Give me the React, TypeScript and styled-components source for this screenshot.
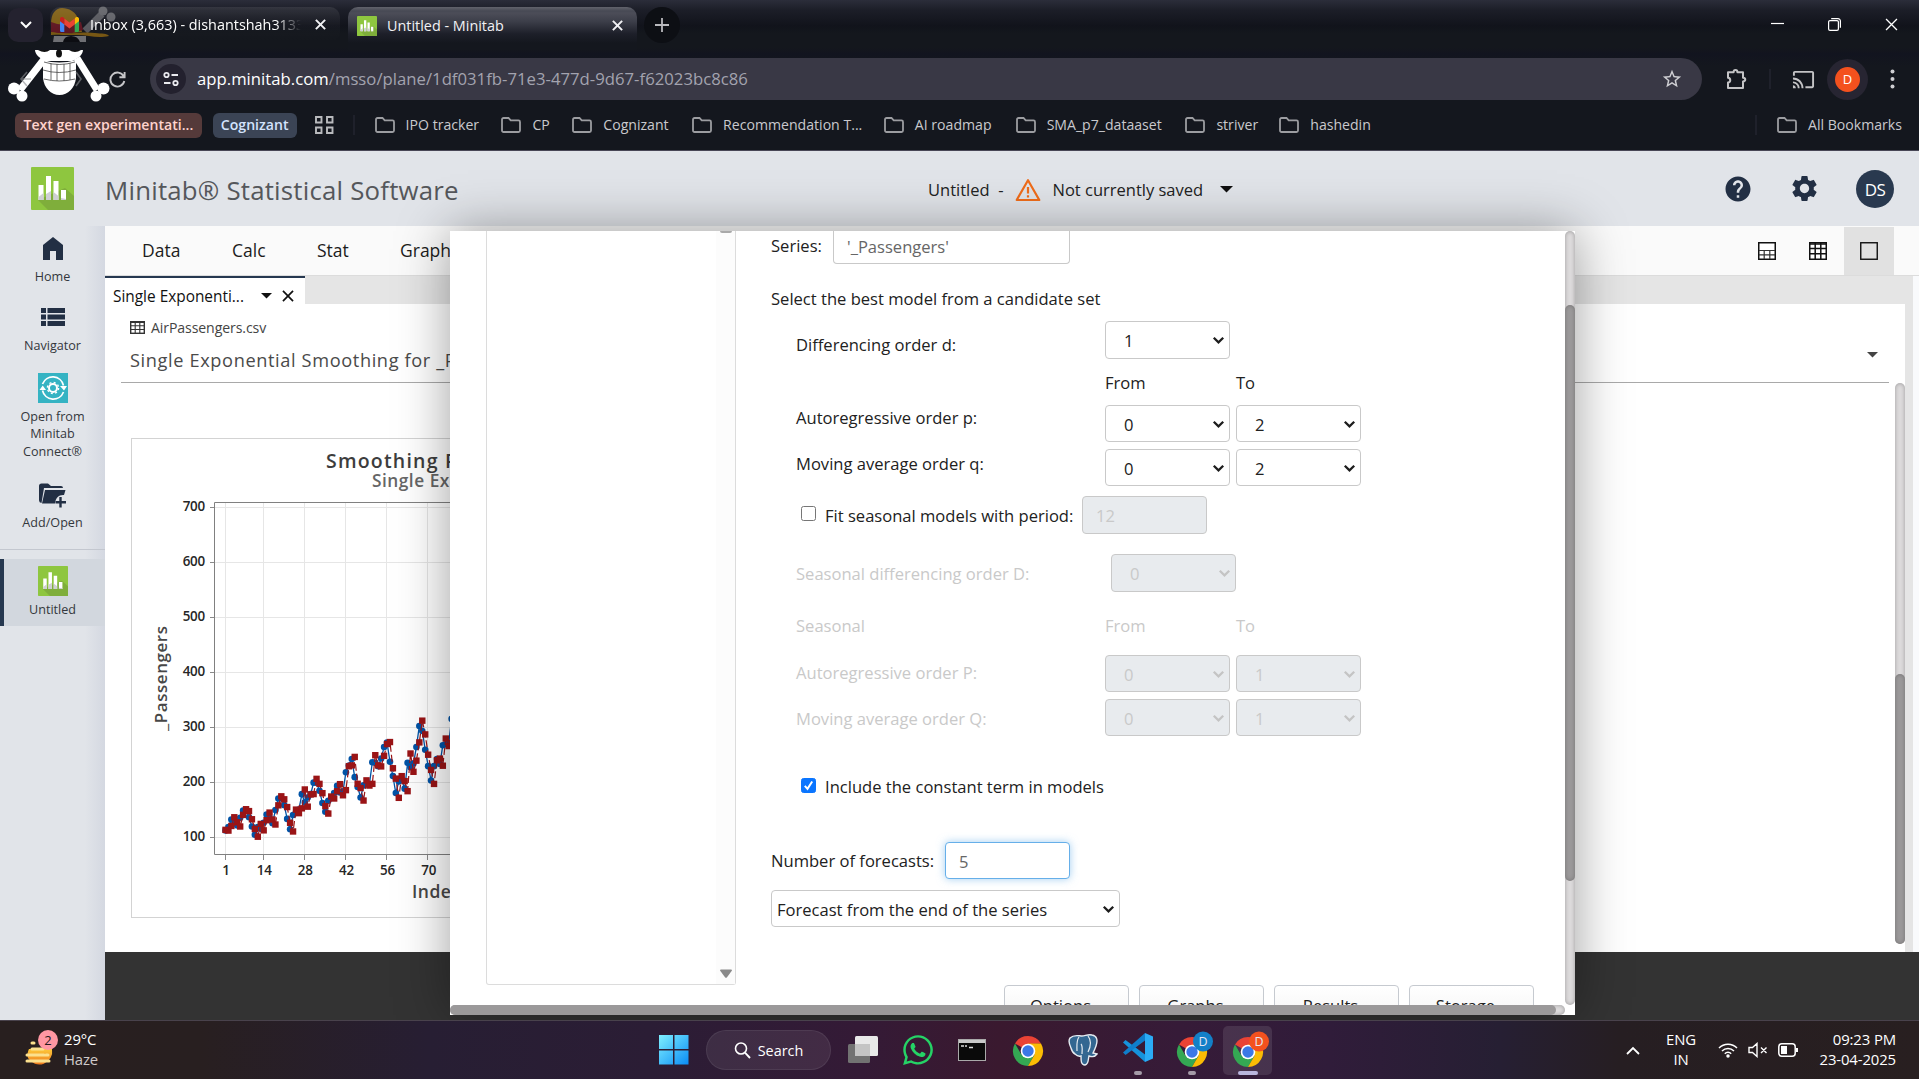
import React from "react";
import styled, { createGlobalStyle } from "styled-components";
import { MdCast, MdHelp, MdSettings, MdStarBorder } from "react-icons/md";
import { FaWhatsapp } from "react-icons/fa";

const ui = `"Open Sans", "Noto Sans", sans-serif`;

const Global = createGlobalStyle`
  * { box-sizing: border-box; }
  body { margin: 0; overflow: hidden; background: #333; font-family: ${ui}; }
  svg { display: block; flex: none; }
`;

const Screen = styled.div`
  position: relative;
  width: 1919px;
  height: 1079px;
  display: flex;
  flex-direction: column;
  overflow: hidden;
`;

/* ---------- browser ---------- */

const Browser = styled.header`
  position: relative;
  height: 151px;
  flex: none;
  background: linear-gradient(#2b2d3a 0, #1c1e28 10px, #11131b 26px, #14171d 34px, #14171d 48px, #12141f 54px, #14171e 66px, #14171e 100%);
  border-bottom: 1px solid #484756;
  color: #e3e3e8;
`;

const TabStrip = styled.div`
  height: 50px;
  display: flex;
  align-items: flex-start;
  padding: 7px 0 0 8px;
`;

const TabSearch = styled.div`
  width: 35px;
  height: 34px;
  margin-top: 1px;
  border-radius: 10px;
  background: #24222f;
  display: flex;
  align-items: center;
  justify-content: center;
`;

const BrowserTab = styled.div<{ $active?: boolean }>`
  position: relative;
  width: ${(p) => (p.$active ? 289 : 290)}px;
  height: ${(p) => (p.$active ? 43 : 35)}px;
  margin-left: ${(p) => (p.$active ? 8 : 7)}px;
  padding: ${(p) => (p.$active ? "0 14px 6px 9px" : "0 14px 0 10px")};
  border-radius: 10px 10px ${(p) => (p.$active ? "0 0" : "10px 10px")};
  background: ${(p) =>
    p.$active
      ? "linear-gradient(#62636c 0, #474954 4px, #4c4d58 6px, #3d3f4a 14px, #1d1f29 27px, #14171e 36px)"
      : "linear-gradient(rgba(255,255,255,0.09) 0, rgba(255,255,255,0.05) 10px, rgba(255,255,255,0.01) 24px, transparent 100%)"};
  display: flex;
  align-items: center;
  font-size: 14.4px;
  color: #f1f1f4;
  white-space: nowrap;
`;

const TabTitle = styled.span<{ $ml: number; $fade?: boolean }>`
  flex: 1;
  margin-left: ${(p) => p.$ml}px;
  margin-right: 14px;
  overflow: hidden;
  line-height: 22px;
  ${(p) => p.$fade && "color: #fff; mask-image: linear-gradient(90deg, #000 88%, transparent 100%);"}
`;

const NewTab = styled.div`
  width: 36px;
  height: 36px;
  margin: 0 0 0 7px;
  border-radius: 50%;
  background: #0d0f14;
  display: flex;
  align-items: center;
  justify-content: center;
`;

const WindowButtons = styled.div`
  margin-left: auto;
  padding: 11px 21px 0 0;
  display: flex;
  align-items: center;
  gap: 44px;
`;

const Toolbar = styled.div`
  height: 58px;
  display: flex;
  align-items: center;
  padding: 0 18px 0 109px;
`;

const AddressBar = styled.div`
  width: 1552px;
  height: 42px;
  margin-left: 24px;
  padding: 0 19px 0 6px;
  border-radius: 21px;
  background: #393845;
  display: flex;
  align-items: center;
  font-size: 16.7px;
  letter-spacing: 0.02px;
  color: #a3a3af;
  b { font-weight: 400; color: #fff; }
`;

const SiteInfo = styled.div`
  width: 30px;
  height: 30px;
  border-radius: 50%;
  background: #23212e;
  margin-right: 11px;
  display: flex;
  align-items: center;
  justify-content: center;
`;

const Url = styled.span`
  flex: 1;
  line-height: 24px;
`;

const Profile = styled.div`
  width: 41px;
  height: 41px;
  margin-left: 12px;
  border-radius: 50%;
  background: #272532;
  display: flex;
  align-items: center;
  justify-content: center;
  span {
    width: 25px;
    height: 25px;
    border-radius: 50%;
    background: #f4511e;
    color: #fff;
    font-size: 13px;
    line-height: 25px;
    text-align: center;
  }
`;

const ToolIcon = styled.div<{ $ml: number }>`
  margin-left: ${(p) => p.$ml}px;
  color: #c4c4c6;
`;

const Divider = styled.div<{ $ml: number }>`
  width: 2px;
  height: 20px;
  margin-left: ${(p) => p.$ml}px;
  background: #1f212b;
`;

const Bookmarks = styled.div`
  height: 34px;
  display: flex;
  align-items: center;
  padding: 0 17px 0 15px;
  font-size: 14.1px;
  line-height: 18px;
  color: #c9c9cd;
  white-space: nowrap;
`;

const GroupChip = styled.div<{ $w: number; $bg: string; $fg: string }>`
  width: ${(p) => p.$w}px;
  height: 25px;
  margin-right: 11px;
  border-radius: 6px;
  background: ${(p) => p.$bg};
  color: ${(p) => p.$fg};
  font-size: 14.1px;
  font-weight: 600;
  letter-spacing: 0;
  line-height: 23px;
  text-align: center;
`;

const Bookmark = styled.div<{ $w: number }>`
  width: ${(p) => p.$w}px;
  display: flex;
  align-items: center;
  gap: 11px;
  span { padding-bottom: 1px; }
`;

const PirateMark = styled.svg`
  position: absolute;
  left: 0;
  top: 0;
`;

/* ---------- Minitab shell ---------- */

const AppArea = styled.main`
  position: relative;
  height: 869px;
  flex: none;
  display: flex;
  flex-direction: column;
  background: #e1e4e9;
  overflow: hidden;
`;

const AppHeader = styled.div`
  height: 75px;
  flex: none;
  display: flex;
  align-items: center;
  padding: 0 25px 0 31px;
`;

const Product = styled.h1`
  width: 823px;
  margin: 2px 0 0 31px;
  font-size: 25.8px;
  font-weight: 400;
  letter-spacing: 0.21px;
  line-height: 36px;
  color: #55575b;
`;

const SaveState = styled.div`
  display: flex;
  align-items: center;
  margin-top: 2px;
  font-size: 16.5px;
  line-height: 24px;
  color: #222;
  white-space: pre;
`;

const WarningIcon = styled.svg`
  margin: 0 11px 0 12px;
`;

const Account = styled.div`
  width: 38px;
  height: 38px;
  margin-left: 36px;
  border-radius: 50%;
  background: #29394f;
  color: #fff;
  font-size: 17px;
  letter-spacing: -0.5px;
  line-height: 39px;
  text-align: center;
`;

const HeaderTools = styled.div`
  margin-left: auto;
  display: flex;
  align-items: center;
  color: #222f44;
`;

const Body = styled.div`
  flex: 1;
  display: flex;
  min-height: 0;
`;

const Sidebar = styled.nav`
  width: 105px;
  flex: none;
  background: linear-gradient(90deg, #e1e4e9 85px, #d4d8e1 105px);
  display: flex;
  flex-direction: column;
`;

const SideItem = styled.div<{ $h: number; $pt: number; $on?: boolean }>`
  height: ${(p) => p.$h}px;
  padding-top: ${(p) => p.$pt}px;
  border-left: ${(p) => (p.$on ? "4px solid #263850" : "0")};
  padding-right: ${(p) => (p.$on ? 4 : 0)}px;
  background: ${(p) => (p.$on ? "#d2d7de" : "transparent")};
  display: flex;
  flex-direction: column;
  align-items: center;
`;

const SideLabel = styled.span<{ $mt: number }>`
  margin-top: ${(p) => p.$mt}px;
  font-size: 12.6px;
  line-height: 17.4px;
  text-align: center;
  color: #34373c;
`;

const SideRule = styled.div`
  height: 1px;
  margin-bottom: 9px;
  background: #c3c7cf;
`;

const Workspace = styled.section`
  flex: 1;
  display: flex;
  flex-direction: column;
  min-width: 0;
  background: #333;
`;

const MenuBar = styled.div`
  height: 50px;
  flex: none;
  display: flex;
  align-items: center;
  background: #fafafa;
  border-bottom: 1px solid #dcdcdc;
  padding: 0 25px 0 37px;
  font-size: 17.5px;
  color: #1c1c1c;
`;

const MenuEntry = styled.span<{ $w: number }>`
  width: ${(p) => p.$w}px;
  line-height: 24px;
  padding-bottom: 1px;
`;

const ViewButtons = styled.div`
  margin-left: auto;
  display: flex;
  gap: 1px;
`;

const ViewButton = styled.div<{ $on?: boolean }>`
  width: 50px;
  height: 48px;
  display: flex;
  align-items: center;
  justify-content: center;
  background: ${(p) => (p.$on ? "#e1e1e1" : "transparent")};
`;

const Columns = styled.div`
  height: 676px;
  flex: none;
  display: flex;
  background: #f9fafc;
`;

const Gutter = styled.div`
  width: 8px;
  background: #e5e5e5;
`;

const Pane = styled.div`
  width: 1800px;
  display: flex;
  flex-direction: column;
`;

const DocTabs = styled.div`
  height: 28px;
  flex: none;
  background: #e5e5e5;
`;

const DocTab = styled.div`
  width: 200px;
  height: 30px;
  padding: 8px 11px 0 8px;
  border-top: 2px solid #263850;
  background: #fff;
  position: relative;
  z-index: 1;
  display: flex;
  align-items: center;
  font-size: 15.4px;
  line-height: 20px;
  color: #111;
`;

const DocTitle = styled.span`
  flex: 1;
  padding-top: 2px;
  white-space: nowrap;
`;

const OutputHead = styled.div`
  height: 79px;
  flex: none;
  margin: 0 16px;
  padding: 13px 11px 0 9px;
  border-bottom: 1px solid #a9a9a9;
  display: flex;
`;

const OutputTitles = styled.div`
  flex: 1;
`;

const OutputMenu = styled.div`
  padding-top: 35px;
`;

const SourceFile = styled.div`
  height: 20px;
  display: flex;
  align-items: center;
  gap: 6px;
  font-size: 14.1px;
  letter-spacing: -0.1px;
  color: #444;
`;

const OutputTitle = styled.div`
  margin-top: 10px;
  font-size: 18.2px;
  letter-spacing: 0.62px;
  line-height: 26px;
  color: #4a4a4a;
`;

const OutputBody = styled.div`
  flex: 1;
  display: flex;
  background: #fff;
  min-height: 0;
`;

const Paper = styled.div`
  flex: 1;
  display: flex;
  flex-direction: column;
  background: #fff;
  min-height: 0;
`;

const ChartFrame = styled.div`
  width: 700px;
  height: 480px;
  margin: 55px 0 0 26px;
  border: 1px solid #d3d3d3;
`;

const ScrollTrack = styled.div<{ $h: number; $pt: number }>`
  width: 10px;
  height: ${(p) => p.$h}px;
  padding-top: ${(p) => p.$pt}px;
  border-radius: 5px;
  background: #dddbdc;
  box-shadow: inset 0 0 4px rgba(0, 0, 0, 0.3);
`;

const ScrollThumb = styled.div<{ $h: number }>`
  width: 10px;
  height: ${(p) => p.$h}px;
  border-radius: 5px;
  background: #9b999a;
  box-shadow: inset 0 0 4px rgba(0, 0, 0, 0.25);
`;

/* ---------- dialog ---------- */

const Dialog = styled.div`
  position: absolute;
  left: 450px;
  top: 80px;
  width: 1125px;
  height: 784px;
  z-index: 2;
  display: flex;
  flex-direction: column;
  background: #fff;
  box-shadow: 0 0 50px rgba(0, 0, 0, 0.38);
`;

const DialogRow = styled.div`
  height: 774px;
  display: flex;
  overflow: hidden;
`;

const DialogBody = styled.div`
  width: 1115px;
  height: 774px;
  display: flex;
  overflow: hidden;
`;

const VariableList = styled.div`
  width: 250px;
  height: 754px;
  margin-left: 36px;
  border: 1px solid #dcdcdc;
  border-top: 0;
  border-radius: 0 0 3px 3px;
  display: flex;
  justify-content: flex-end;
`;

const ListScroll = styled.div`
  width: 19px;
  background: #fcfcfc;
  display: flex;
  flex-direction: column;
  align-items: center;
  justify-content: space-between;
  padding-bottom: 6px;
`;

const ListThumbEnd = styled.div`
  width: 12px;
  height: 2px;
  background: #a9a9a9;
  border-radius: 0 0 2px 2px;
`;

const Form = styled.div`
  margin-left: 35px;
  width: 790px;
  display: flex;
  flex-direction: column;
  font-size: 16.57px;
  color: #212121;
`;

const Row = styled.div<{ $mt?: number; $h: number; $indent?: boolean; $off?: boolean }>`
  height: ${(p) => p.$h}px;
  flex: none;
  margin-top: ${(p) => p.$mt ?? 0}px;
  padding-left: ${(p) => (p.$indent ? 25 : 0)}px;
  color: ${(p) => (p.$off ? "#c9c9c9" : "#212121")};
  display: flex;
  align-items: center;
`;

const Label = styled.span<{ $w: number; $down?: number; $up?: number }>`
  width: ${(p) => p.$w}px;
  flex: none;
  line-height: 24px;
  padding-top: ${(p) => (p.$down ?? 0) * 2}px;
  padding-bottom: ${(p) => (p.$up ?? 0) * 2}px;
  white-space: nowrap;
`;

const Field = styled.div<{ $w: number; $off?: boolean; $focus?: boolean; $cut?: boolean }>`
  width: ${(p) => p.$w}px;
  height: 100%;
  padding: ${(p) => (p.$cut ? "0 13px 2px" : "1px 13px 0")};
  border: 1px solid ${(p) => (p.$focus ? "#66afe9" : "#c9c9c9")};
  border-top-width: ${(p) => (p.$cut ? 0 : 1)}px;
  border-radius: ${(p) => (p.$cut ? "0 0 4px 4px" : "4px")};
  background: ${(p) => (p.$off ? "#e8ebee" : "#fff")};
  box-shadow: ${(p) => (p.$focus ? "0 0 8px rgba(102, 175, 233, 0.6)" : "none")};
  color: ${(p) => (p.$off ? "#c9c9c9" : "#666")};
  display: flex;
  align-items: center;
`;

const SelectBox = styled.div<{ $w: number; $ml?: number; $off?: boolean; $flush?: boolean }>`
  width: ${(p) => p.$w}px;
  height: 100%;
  margin-left: ${(p) => p.$ml ?? 0}px;
  padding: 1px 4px 0 ${(p) => (p.$flush ? 5 : 18)}px;
  border: 1px solid #c9c9c9;
  border-radius: 4px;
  background: ${(p) => (p.$off ? "#e8ebee" : "#fff")};
  color: ${(p) => (p.$off ? "#c9c9c9" : "#212121")};
  display: flex;
  align-items: center;
  justify-content: space-between;
`;

const CheckBox = styled.div<{ $on?: boolean }>`
  width: 15px;
  height: 15px;
  margin: 0 9px 3px 5px;
  border-radius: 2.5px;
  border: 1.3px solid ${(p) => (p.$on ? "#0a75ff" : "#767676")};
  background: ${(p) => (p.$on ? "#0a75ff" : "#fff")};
`;

const Buttons = styled.div`
  margin: 58px 0 0 233px;
  display: flex;
  flex: none;
  gap: 10px;
`;

const DialogButton = styled.div`
  width: 125px;
  height: 38px;
  flex: none;
  padding-left: 1px;
  border: 1px solid #c6cad0;
  border-radius: 4px;
  background: linear-gradient(#fff, #f4f4f4);
  line-height: 39px;
  text-align: center;
`;

const HScroll = styled.div`
  width: 1115px;
  height: 10px;
  border-radius: 5px;
  background: #dddbdc;
  box-shadow: inset 0 0 4px rgba(0, 0, 0, 0.3);
`;

const HThumb = styled.div`
  width: 1106px;
  height: 10px;
  border-radius: 5px;
  background: #9b999a;
`;

/* ---------- taskbar ---------- */

const Taskbar = styled.footer`
  height: 59px;
  flex: none;
  border-top: 1px solid #49424c;
  background: linear-gradient(90deg, #281f1f 0, #281f20 200px, #271e33 430px, #2b1d35 650px, #341a36 860px, #3a192f 1000px, #361b38 1180px, #301c3a 1330px, #261f33 1500px, #261e22 1620px, #281f20 100%);
  display: flex;
  align-items: center;
  color: #fff;
`;

const Weather = styled.div`
  width: 634px;
  padding-left: 22px;
  display: flex;
  align-items: center;
  gap: 6px;
`;

const TwoLines = styled.div<{ $w?: number; $align?: string; $ml?: number }>`
  width: ${(p) => (p.$w ? p.$w + "px" : "auto")};
  margin-left: ${(p) => p.$ml ?? 0}px;
  padding-bottom: 2px;
  text-align: ${(p) => p.$align ?? "left"};
  font-size: 14.9px;
  letter-spacing: -0.12px;
  line-height: 20px;
  white-space: nowrap;
`;

const Muted = styled.span`
  color: #cfcaca;
`;

const TaskIcons = styled.div`
  display: flex;
  align-items: center;
`;

const TaskSlot = styled.div<{ $w: number; $on?: boolean; $mid?: boolean }>`
  width: ${(p) => p.$w}px;
  height: 49px;
  display: flex;
  flex-direction: column;
  align-items: center;
  justify-content: ${(p) => (p.$mid ? "center" : "flex-end")};
  border-radius: 5px;
  background: ${(p) => (p.$on ? "rgba(255,255,255,0.1)" : "transparent")};
`;

const Lift = styled.div`
  padding-bottom: 5px;
`;

const Running = styled.div<{ $w: number; $c: string }>`
  width: ${(p) => p.$w}px;
  height: 4px;
  margin-top: 4px;
  border-radius: 2px;
  background: ${(p) => p.$c};
`;

const SearchPill = styled.div`
  width: 125px;
  height: 40px;
  margin: 0 16px;
  border-radius: 20px;
  border: 1px solid rgba(255, 255, 255, 0.07);
  background: rgba(255, 255, 255, 0.08);
  display: flex;
  align-items: center;
  justify-content: center;
  gap: 7px;
  font-size: 14.4px;
`;

const Tray = styled.div`
  margin-left: auto;
  padding-right: 23px;
  display: flex;
  align-items: center;
`;

const TrayIcon = styled.svg<{ $ml: number }>`
  margin-left: ${(p) => p.$ml}px;
`;

/* ---------- drawings ---------- */

const Cross = ({ s = 10, w = 2, c = "#f1f1f4" }) => (
  <svg width={s} height={s} viewBox="0 0 10 10">
    <path d="M.8.8l8.4 8.4M9.2.8L.8 9.2" stroke={c} strokeWidth={(w * 10) / s} fill="none" />
  </svg>
);

const Caret = ({ w = 13, c = "#111" }) => (
  <svg width={w} height={w / 2} viewBox="0 0 12 6">
    <path d="M0 0h12L6 6z" fill={c} />
  </svg>
);

const Arrow = ({ off = false }) => (
  <svg width="13" height="9" viewBox="0 0 13 9">
    <path d="M1.8 1.8l4.7 4.6 4.7-4.6" stroke={off ? "#c4c4c4" : "#1d1d1d"} strokeWidth="2.3" fill="none" />
  </svg>
);

const Folder = () => (
  <svg width="20" height="16" viewBox="0 0 20 16">
    <path d="M1 13.5v-11A1.5 1.5 0 0 1 2.5 1h5l2.2 2.4h7.8A1.5 1.5 0 0 1 19 4.900v8.600A1.500 1.500 0 0 1 17.500 15h-15A1.500 1.500 0 0 1 1 13.500z" stroke="#9c9da1" strokeWidth="1.8" fill="none" />
  </svg>
);

const Puzzle = () => (
  <svg width="22" height="22" viewBox="0 0 22 22">
    <path d="M2 4.200h5.600C7.600 1.200 11.400 1.200 11.400 4.200H17v5.600c3 0 3 3.600 0 3.600V20H2v-5.400c3-.4 3-4.400 0-4.800z" stroke="#c4c4c6" strokeWidth="2" strokeLinejoin="round" fill="none" />
  </svg>
);

const MinitabLogo = ({ s = 43 }) => (
  <svg width={s} height={s} viewBox="0 0 43 43">
    <rect width="43" height="43" rx="1" fill="#8ec63f" />
    <path d="M7 33l10 10h26V29l-9-8z" fill="#7fae3b" />
    <path d="M7.500 18h5v15h-5zM15 9h5v24h-5zM22.500 14h5v19h-5zM30 23h5v10h-5z" fill="#fff" />
    <path d="M7.500 30l5-4v7h-5zM15 27l5-3v9h-5zM22.500 25l5 4v4h-5zM30 31l5 1v1h-5z" fill="#cfcfd4" />
  </svg>
);

const Gmail = () => (
  <svg width="19" height="15" viewBox="0 0 19 15">
    <path d="M0 2v11.500c0 .8.600 1.500 1.400 1.500H4.300V6z" fill="#4285f4" />
    <path d="M19 2v11.500c0 .8-.6 1.500-1.400 1.500h-2.900V6z" fill="#34a853" />
    <path d="M14.700 2v5.500L19 4.200V2.100C19 .2 16.900-.7 15.500.5z" fill="#fbbc04" />
    <path d="M4.300 7.500V1.500l5.200 4 5.200-4v6l-5.200 4z" fill="#ea4335" />
    <path d="M0 2.100v2.100l4.300 3.300v-6L3.500.5C2.100-.7 0 .2 0 2.100z" fill="#c5221f" />
  </svg>
);

const Pirate = () => (
  <PirateMark width="125" height="110" viewBox="0 0 125 110">
    <g>
      <path d="M85 31l17-17" stroke="#55565c" strokeWidth="7" />
      <circle cx="103" cy="11" r="4.500" fill="#5f6066" />
      <circle cx="111" cy="17" r="4.500" fill="#5f6066" />
      <path d="M51 24C51 13 56 8 62 8s15 3 17 14l3 10-31 3z" fill="#7d5c11" />
      <path d="M51 22q14 6 30 0l2 8q-16 6-32 2z" fill="#5d1420" />
      <path d="M51 32c16 3 34-1 44 1 7 1 12 0 14 3-12 3-20-1-32-1-10 0-18 0-26-1z" fill="#765612" />
      <path d="M54 36h32v6H53z" fill="#6f7074" />
      <path d="M63 42q1-6 8-6t9 6z" fill="#0c0d12" />
    </g>
    <g fill="#fff">
      <path d="M45 58L20 90M77 58L97 90" stroke="#fff" strokeWidth="7" />
      <circle cx="14" cy="88.500" r="6" />
      <circle cx="22" cy="96" r="5.500" />
      <circle cx="103.500" cy="88.500" r="6" />
      <circle cx="96" cy="96" r="5.500" />
      <path d="M35 50h48c0 5-6 9-11 11H46c-5-2-11-6-11-11z" />
      <path d="M43 60q16 5 33 0v18c-1 10-8 17-16.500 17S44 88 43 78z" />
    </g>
    <ellipse cx="59" cy="53.500" rx="3" ry="4" fill="#111" />
    <path d="M38 50h12q-5 4-12 0zM69 50h12q-6 4-12 0z" fill="#111" />
    <path d="M44 62q15 5 31 0M43 70q16 5 33 0M44 79q15 4 31 0M51 63v17M57 64v17M64 64v17M70 63v17" stroke="#444" strokeWidth=".8" fill="none" />
    <path d="M27 72l-6 7 6 7M21 79h10M76 72l5 7-5 7" stroke="#8b8c90" strokeWidth="1.600" fill="none" opacity=".6" />
  </PirateMark>
);

const GridIcon = ({ s = 18, top = false }) => (
  <svg width={s} height={s} viewBox="0 0 18 18">
    <rect x=".75" y=".75" width="16.500" height="16.500" fill="#fff" stroke="#111" strokeWidth="1.500" />
    {top ? (
      <path d="M1 8.500h16M1 12.800h16M6.200 8.500V17M11.800 8.500V17" stroke="#333" strokeWidth="1.200" />
    ) : (
      <path d="M1 2h16M1 6.500h16M1 11.800h16M6.200 1v16M11.800 1v16" stroke="#111" strokeWidth="1.500" />
    )}
  </svg>
);

const Chrome = ({ badge }: { badge?: string }) => (
  <svg width="44" height="36" viewBox="-22 -21 44 36">
    <path d="M0 0L-13-7.500A15 15 0 0 1 13-7.500L0-7z" fill="#ea4335" />
    <path d="M-13-7.500A15 15 0 0 0 0 15L6.500 3.700-6.500 3.700z" fill="#34a853" />
    <path d="M13-7.500A15 15 0 0 1 0 15L6.500 3.700 0-7.500z" fill="#fbbc04" />
    <circle r="7.300" fill="#fff" />
    <circle r="5.700" fill="#3b78e7" />
    {badge && <circle cx="11" cy="-10.500" r="10" fill={badge} />}
    {badge && (
      <text x="11" y="-6" fontSize="12.500" textAnchor="middle" fill="#e6e6f2" fontFamily="Open Sans">D</text>
    )}
  </svg>
);

const passengers = [
  112, 118, 132, 129, 121, 135, 148, 148, 136, 119, 104, 118, 115, 126, 141, 135, 125, 149, 170, 170, 158, 133, 114, 140,
  145, 150, 178, 163, 172, 178, 199, 199, 184, 162, 146, 166, 171, 180, 193, 181, 183, 218, 230, 242, 209, 191, 172, 194,
  196, 196, 236, 235, 229, 243, 264, 272, 237, 211, 180, 201, 204, 188, 235, 227, 234, 264, 302, 293, 259, 229, 203, 229,
  242, 233, 267, 269, 270, 315, 364, 347, 312, 274, 237, 278,
];
const smoothed = passengers.reduce<number[]>((acc, _, i) => {
  acc.push(i === 0 ? 113 : acc[i - 1] + 1.33 * (passengers[i - 1] - acc[i - 1]));
  return acc;
}, []);
const px = (i: number) => 93.5 + i * 2.937;
const py = (v: number) => 398 - (v - 100) * 0.5492;
const line = (d: number[]) => d.map((v, i) => `${i ? "L" : "M"}${px(i).toFixed(1)} ${py(v).toFixed(1)}`).join("");

const SmoothingChart = () => (
  <svg width="690" height="478" viewBox="0 0 690 478" fontFamily="Open Sans, Noto Sans, sans-serif">
    <text x="194" y="29" fontSize="19.500" fontWeight="600" letterSpacing="1.200" fill="#3d3d3d">Smoothing Plot for _Passengers</text>
    <text x="240" y="48" fontSize="17.300" fontWeight="600" letterSpacing=".5" fill="#666">Single Exponential Method</text>
    {[100, 200, 300, 400, 500, 600, 700].map((v) => (
      <g key={v}>
        <path d={`M83 ${Math.round(py(v)) + 0.500}H690`} stroke="#e6e6e6" />
        <path d={`M78 ${Math.round(py(v)) + 0.500}H83`} stroke="#8a8a8a" />
        <text x="73" y={py(v) + 3.500} fontSize="13.400" fontWeight="600" textAnchor="end" letterSpacing="-.2" fill="#262626">{v}</text>
      </g>
    ))}
    {[1, 14, 28, 42, 56, 70].map((v) => (
      <g key={v}>
        <path d={`M${Math.round(px(v - 1)) - 0.500} 64V416`} stroke="#e6e6e6" />
        <path d={`M${Math.round(px(v - 1)) - 0.500} 416v5`} stroke="#8a8a8a" />
        <text x={px(v - 1) + 0.500} y="435.500" fontSize="13.400" fontWeight="600" textAnchor="middle" letterSpacing="-.2" fill="#262626">{v}</text>
      </g>
    ))}
    <path d="M690 63.500H82.500V415.500H690" stroke="#808080" fill="none" />
    <text x="280" y="459" fontSize="17.500" fontWeight="600" letterSpacing=".5" fill="#474747">Index</text>
    <text transform="translate(34.500 292) rotate(-90)" fontSize="17" fontWeight="600" letterSpacing=".55" fill="#474747">_Passengers</text>
    <path d={line(passengers)} stroke="#0053a6" strokeWidth="1.300" fill="none" />
    {passengers.map((v, i) => (
      <circle key={i} cx={px(i)} cy={py(v)} r="3.300" fill="#0053a6" />
    ))}
    <path d={line(smoothed)} stroke="#9a1416" strokeWidth="1.200" strokeDasharray="7 3" fill="none" />
    {smoothed.map((v, i) => (
      <rect key={i} x={px(i) - 3.200} y={py(v) - 3.200} width="6.400" height="6.400" fill="#9a1416" />
    ))}
  </svg>
);

const Select = ({ value, w = 125, ml, off, flush }: { value: string; w?: number; ml?: number; off?: boolean; flush?: boolean }) => (
  <SelectBox $w={w} $ml={ml} $off={off} $flush={flush}>
    <span>{value}</span>
    <Arrow off={off} />
  </SelectBox>
);

const bookmarks: [string, number][] = [
  ["IPO tracker", 127],
  ["CP", 71],
  ["Cognizant", 120],
  ["Recommendation T...", 192],
  ["AI roadmap", 132],
  ["SMA_p7_dataaset", 170],
  ["striver", 94],
  ["hashedin", 100],
];

export default function App() {
  return (
    <Screen>
      <Global />
      <Browser>
        <Pirate />
        <TabStrip>
          <TabSearch>
            <svg width="12" height="8" viewBox="0 0 12 8"><path d="M1 1l5 5 5-5" stroke="#fff" strokeWidth="2" fill="none" /></svg>
          </TabSearch>
          <BrowserTab>
            <Gmail />
            <TabTitle $ml={11} $fade>Inbox (3,663) - dishantshah3133</TabTitle>
            <Cross s={11} />
          </BrowserTab>
          <BrowserTab $active>
            <MinitabLogo s={20} />
            <TabTitle $ml={10}>Untitled - Minitab</TabTitle>
            <Cross s={11} />
          </BrowserTab>
          <NewTab>
            <svg width="14" height="14" viewBox="0 0 14 14"><path d="M7 0v14M0 7h14" stroke="#b9b9bd" strokeWidth="1.800" /></svg>
          </NewTab>
          <WindowButtons>
            <svg width="13" height="13" viewBox="0 0 13 13"><path d="M0 5.500h13" stroke="#fff" strokeWidth="1.200" /></svg>
            <svg width="13" height="13" viewBox="0 0 13 13"><path d="M.6 4a1.400 1.400 0 0 1 1.400-1.400h7A1.400 1.400 0 0 1 10.400 4v7A1.400 1.400 0 0 1 9 12.400H2A1.400 1.400 0 0 1 .6 11zM3.200.6H10A2.400 2.400 0 0 1 12.400 3v6.800" stroke="#fff" strokeWidth="1.200" fill="none" /></svg>
            <Cross s={13} w={1.300} c="#fff" />
          </WindowButtons>
        </TabStrip>
        <Toolbar>
          <svg width="17" height="17" viewBox="0 0 17 17">
            <path d="M14.600 5.200A7 7 0 1 0 15.300 10M15.600 1v5.200h-5.200" stroke="#c6c6c9" strokeWidth="1.900" fill="none" />
          </svg>
          <AddressBar>
            <SiteInfo>
              <svg width="16" height="16" viewBox="0 0 16 16" stroke="#e9e9ee" strokeWidth="1.800" fill="none">
                <circle cx="3.500" cy="4" r="2.200" /><path d="M8.500 4H15M1 12h6.500" /><circle cx="12.500" cy="12" r="2.200" />
              </svg>
            </SiteInfo>
            <Url><b>app.minitab.com</b>/msso/plane/1df031fb-71e3-477d-9d67-f62023bc8c86</Url>
            <MdStarBorder size={22} color="#cfcfd3" />
          </AddressBar>
          <ToolIcon $ml={24}><Puzzle /></ToolIcon>
          <Divider $ml={21} />
          <ToolIcon $ml={21}><MdCast size={23} /></ToolIcon>
          <Profile><span>D</span></Profile>
          <ToolIcon $ml={22}>
            <svg width="5" height="20" viewBox="0 0 5 20" fill="#cfcfd3"><circle cx="2.500" cy="2.500" r="2" /><circle cx="2.500" cy="10" r="2" /><circle cx="2.500" cy="17.500" r="2" /></svg>
          </ToolIcon>
        </Toolbar>
        <Bookmarks>
          <GroupChip $w={187} $bg="#553a3a" $fg="#ffd3cd">Text gen experimentati...</GroupChip>
          <GroupChip $w={84} $bg="#3b4455" $fg="#d3e3fd">Cognizant</GroupChip>
          <svg width="34" height="18" viewBox="-7 0 34 18" stroke="#b9babd" strokeWidth="1.900" fill="none">
            <path d="M1 1h5.500v5.500H1zM12 1h5.500v5.500H12zM1 11.500h5.500V17H1zM12 11.500h5.500V17H12z" />
          </svg>
          <Divider $ml={11} />
          <svg width="20" height="1" />
          {bookmarks.map(([name, w]) => (
            <Bookmark key={name} $w={w}><Folder /><span>{name}</span></Bookmark>
          ))}
          <Divider $ml={376} />
          <svg width="20" height="1" />
          <Bookmark $w={125}><Folder /><span>All Bookmarks</span></Bookmark>
        </Bookmarks>
      </Browser>

      <AppArea>
        <AppHeader>
          <MinitabLogo />
          <Product>Minitab® Statistical Software</Product>
          <SaveState>
            {"Untitled  -"}
            <WarningIcon width="26" height="24" viewBox="0 0 26 24">
              <path d="M13 2.200L24.300 22H1.700z" stroke="#ef6c1a" strokeWidth="2.200" strokeLinejoin="round" fill="none" />
              <path d="M13 9v6.500M13 17.300v2.300" stroke="#ef6c1a" strokeWidth="2.200" />
            </WarningIcon>
            {"Not currently saved    "}
            <Caret />
          </SaveState>
          <HeaderTools>
            <MdHelp size={30} />
            <svg width="36" height="1" />
            <MdSettings size={31} />
            <Account>DS</Account>
          </HeaderTools>
        </AppHeader>
        <Body>
          <Sidebar>
            <SideItem $h={70} $pt={11}>
              <svg width="20" height="23" viewBox="0 0 20 23"><path d="M10 0l10 8v15h-7v-9H7v9H0V8z" fill="#222f44" /></svg>
              <SideLabel $mt={8}>Home</SideLabel>
            </SideItem>
            <SideItem $h={70} $pt={12}>
              <svg width="24" height="18" viewBox="0 0 24 18"><path d="M0 0h5v5H0zM6.500 0H24v5H6.500zM0 6.500h5v5H0zM6.500 6.500H24v5H6.500zM0 13h5v5H0zM6.500 13H24v5H6.500z" fill="#222f44" /></svg>
              <SideLabel $mt={11}>Navigator</SideLabel>
            </SideItem>
            <SideItem $h={105} $pt={7}>
              <svg width="30" height="30" viewBox="0 0 30 30">
                <rect width="30" height="30" fill="#35b3c3" />
                <path d="M4.500 11a11 11 0 0 1 21 1.500M25.500 19a11 11 0 0 1-21-1.500" stroke="#fff" strokeWidth="1.700" fill="none" />
                <path d="M22 13h7l-3 4.500zM8 17H1.500l3.200-4.500z" fill="#fff" />
                <circle cx="15" cy="15" r="4" stroke="#fff" strokeWidth="2" fill="none" />
                <circle cx="15" cy="15" r="5.600" stroke="#fff" strokeWidth="1.400" strokeDasharray="2 2.400" fill="none" />
              </svg>
              <SideLabel $mt={5}>Open from<br />Minitab<br />Connect®</SideLabel>
            </SideItem>
            <SideItem $h={78} $pt={12}>
              <svg width="27" height="25" viewBox="0 0 27 25">
                <path d="M0 17V3a2.500 2.500 0 0 1 2.500-2.500H9L12 3h10a2 2 0 0 1 2 2H5L2.500 20A3 3 0 0 1 0 17z" fill="#222f44" />
                <path d="M6 7h20.500l-1.500 5c-5-.5-8.500 3-9 8.500H3z" fill="#222f44" />
                <path d="M21.500 14v10.500M16.500 19.200H27" stroke="#222f44" strokeWidth="2.400" />
              </svg>
              <SideLabel $mt={6}>Add/Open</SideLabel>
            </SideItem>
            <SideRule />
            <SideItem $h={67} $pt={7} $on>
              <MinitabLogo s={30} />
              <SideLabel $mt={5}>Untitled</SideLabel>
            </SideItem>
          </Sidebar>
          <Workspace>
            <MenuBar>
              <MenuEntry $w={90}>Data</MenuEntry>
              <MenuEntry $w={85}>Calc</MenuEntry>
              <MenuEntry $w={83}>Stat</MenuEntry>
              <MenuEntry $w={60}>Graph</MenuEntry>
              <ViewButtons>
                <ViewButton><GridIcon top /></ViewButton>
                <ViewButton><GridIcon /></ViewButton>
                <ViewButton $on>
                  <svg width="18" height="18" viewBox="0 0 18 18"><rect x=".75" y=".75" width="16.500" height="16.500" stroke="#111" strokeWidth="1.400" fill="none" /></svg>
                </ViewButton>
              </ViewButtons>
            </MenuBar>
            <Columns>
              <Pane>
                <DocTabs>
                  <DocTab>
                    <DocTitle>Single Exponenti...</DocTitle>
                    <Caret w={11} />
                    <svg width="10" height="1" />
                    <Cross s={12} w={1.700} c="#111" />
                  </DocTab>
                </DocTabs>
                <OutputBody>
                  <Paper>
                    <OutputHead>
                      <OutputTitles>
                        <SourceFile>
                          <svg width="15" height="13" viewBox="0 0 15 13"><rect x=".7" y=".7" width="13.600" height="11.600" stroke="#333" strokeWidth="1.400" fill="none" /><path d="M1 1.500h13M1 4.800h13M1 8.500h13M5.200 1v11M9.800 1v11" stroke="#333" strokeWidth="1.100" /></svg>
                          AirPassengers.csv
                        </SourceFile>
                        <OutputTitle>Single Exponential Smoothing for _Passengers</OutputTitle>
                      </OutputTitles>
                      <OutputMenu><Caret w={11} c="#444" /></OutputMenu>
                    </OutputHead>
                    <OutputBody>
                      <Paper>
                        <ChartFrame><SmoothingChart /></ChartFrame>
                      </Paper>
                      <ScrollTrack $h={561} $pt={291}><ScrollThumb $h={270} /></ScrollTrack>
                    </OutputBody>
                  </Paper>
                </OutputBody>
              </Pane>
              <Gutter />
            </Columns>
          </Workspace>
        </Body>

        <Dialog>
          <DialogRow>
            <DialogBody>
              <VariableList>
                <ListScroll>
                  <ListThumbEnd />
                  <svg width="12" height="9" viewBox="0 0 12 9"><path d="M0 1.500Q0 .5 1 .5h10q1 0 1 1L7 8.200q-1 1-2 0z" fill="#8a8a8a" /></svg>
                </ListScroll>
              </VariableList>
              <Form>
                <Row $h={33}>
                  <Label $w={62} $up={2}>Series:</Label>
                  <Field $w={237} $cut>'_Passengers'</Field>
                </Row>
                <Row $mt={23} $h={24}><Label $w={400}>Select the best model from a candidate set</Label></Row>
                <Row $mt={10} $h={38} $indent>
                  <Label $w={309} $down={5}>Differencing order d:</Label>
                  <Select value="1" />
                </Row>
                <Row $mt={12} $h={24} $indent><Label $w={309}> </Label><Label $w={131}>From</Label><Label $w={60}>To</Label></Row>
                <Row $mt={10} $h={37} $indent>
                  <Label $w={309} $up={5.500}>Autoregressive order p:</Label>
                  <Select value="0" /><Select value="2" ml={6} />
                </Row>
                <Row $mt={7} $h={37} $indent>
                  <Label $w={309} $up={3.500}>Moving average order q:</Label>
                  <Select value="0" /><Select value="2" ml={6} />
                </Row>
                <Row $mt={10} $h={38} $indent>
                  <CheckBox />
                  <Label $w={257} $down={0.500}>Fit seasonal models with period:</Label>
                  <Field $w={125} $off>12</Field>
                </Row>
                <Row $mt={20} $h={38} $indent $off>
                  <Label $w={315} $down={0.500}>Seasonal differencing order D:</Label>
                  <Select value="0" off />
                </Row>
                <Row $mt={22} $h={24} $indent $off><Label $w={309}>Seasonal</Label><Label $w={131}>From</Label><Label $w={60}>To</Label></Row>
                <Row $mt={17} $h={37} $indent $off>
                  <Label $w={309} $up={1}>Autoregressive order P:</Label>
                  <Select value="0" off /><Select value="1" ml={6} off />
                </Row>
                <Row $mt={7} $h={37} $indent $off>
                  <Label $w={309} $down={1}>Moving average order Q:</Label>
                  <Select value="0" off /><Select value="1" ml={6} off />
                </Row>
                <Row $mt={39} $h={24} $indent>
                  <CheckBox $on>
                    <svg width="13" height="13" viewBox="0 0 13 13"><path d="M2.800 6.800l2.700 3 4.700-7.300" stroke="#fff" strokeWidth="2" fill="none" /></svg>
                  </CheckBox>
                  <Label $w={300}>Include the constant term in models</Label>
                </Row>
                <Row $mt={43} $h={37}>
                  <Label $w={174}>Number of forecasts:</Label>
                  <Field $w={125} $focus>5</Field>
                </Row>
                <Row $mt={11} $h={37}><Select value="Forecast from the end of the series" w={349} flush /></Row>
                <Buttons>
                  <DialogButton>Options...</DialogButton>
                  <DialogButton>Graphs...</DialogButton>
                  <DialogButton>Results...</DialogButton>
                  <DialogButton>Storage...</DialogButton>
                </Buttons>
              </Form>
            </DialogBody>
            <ScrollTrack $h={774} $pt={74}><ScrollThumb $h={576} /></ScrollTrack>
          </DialogRow>
          <HScroll><HThumb /></HScroll>
        </Dialog>
      </AppArea>

      <Taskbar>
        <Weather>
          <svg width="36" height="40" viewBox="0 1 36 40">
            <defs><linearGradient id="sun" x1="0" y1="0" x2="0" y2="1"><stop offset="0" stopColor="#fdc93a" /><stop offset="1" stopColor="#ee7a1d" /></linearGradient></defs>
            <path d="M7 20h23a13 13 0 0 1-24 9q-1.500-4 1-9z" fill="url(#sun)" />
            <path d="M10 14h2M10 20h11M5 26h17M24 26h2M5 32h22" stroke="#fbe08e" strokeWidth="3" strokeLinecap="round" />
            <circle cx="26" cy="11" r="10" fill="#ff97a2" />
            <text x="26" y="15.500" fontSize="13" textAnchor="middle" fill="#241a1c" fontFamily="Open Sans">2</text>
          </svg>
          <TwoLines>29°C<br /><Muted>Haze</Muted></TwoLines>
        </Weather>
        <TaskIcons>
          <svg width="56" height="30" viewBox="-25 0 56 30">
            <defs><linearGradient id="win" x1="0" y1="0" x2="1" y2="1"><stop offset="0" stopColor="#7ff0ff" /><stop offset="1" stopColor="#0a8cf5" /></linearGradient></defs>
            <path d="M0 0h14v14H0zM15.500 0h14v14h-14zM0 15.500h14v14H0zM15.500 15.500h14v14h-14z" fill="url(#win)" />
          </svg>
          <SearchPill>
            <svg width="17" height="17" viewBox="0 0 17 17"><circle cx="7" cy="6.500" r="5.500" stroke="#fff" strokeWidth="1.600" fill="none" /><path d="M11 10.700l5 5.300" stroke="#fff" strokeWidth="1.900" /></svg>
            Search
          </SearchPill>
          <svg width="32" height="30" viewBox="0 0 32 30">
            <rect x="1" y="9" width="22" height="19" rx="1.500" fill="#727272" />
            <rect x="8" y="1" width="23" height="20" rx="1.500" fill="#e9e9e9" />
            <rect x="8" y="9" width="15" height="12" fill="#c4c4c4" />
          </svg>
          <TaskSlot $w={78} $mid><FaWhatsapp size={34} color="#25d366" /></TaskSlot>
          <svg width="29" height="22" viewBox="-1 0 29 22">
            <rect x=".5" y=".5" width="27" height="21" fill="#0a0a0a" stroke="#a9a9a9" />
            <rect x="1" y="1" width="26" height="3" fill="#c9c9c9" />
            <path d="M3 7h3M7 7h2M11 8.500h4" stroke="#ddd" strokeWidth="1.500" />
          </svg>
          <svg width="20" height="1" />
          <Lift><Chrome /></Lift>
          <svg width="17" height="1" />
          <svg width="32" height="32" viewBox="0 0 32 32">
            <path d="M3 4c4-4 9-2 12-2s6-2 10-1c5 1 6 5 4 11-1 3-2 5-3 7l4 1c-2 3-5 3-8 2-1 3 0 8-4 9-4 0-4-4-4-9-3 1-5-1-6-2-2-1-3-2-4-6C2 10 1 7 3 4z" fill="#336791" stroke="#e6ebf0" strokeWidth="1.400" />
            <path d="M12 3c-3 4-2 9-2 14M21 2c4 5 2 12 0 16M14 10c2 2 1 7 1 10" stroke="#e6ebf0" strokeWidth="1.200" fill="none" />
          </svg>
          <svg width="17" height="1" />
          <TaskSlot $w={44}>
            <svg width="32" height="36" viewBox="0 0 32 36">
              <path d="M23 31L1 11.500 3.500 9 23 23.500z" fill="#1593dc" />
              <path d="M23 2L1 21.500l2.500 2.500L23 9.500z" fill="#0f7ecb" />
              <path d="M23 2l8 3.500v22L23 31z" fill="#2bacf5" />
            </svg>
            <Running $w={8} $c="#a59ba8" />
          </TaskSlot>
          <svg width="10" height="1" />
          <TaskSlot $w={44}><Chrome badge="#1380c8" /><Running $w={8} $c="#a59ba8" /></TaskSlot>
          <svg width="9" height="1" />
          <TaskSlot $w={49} $on><Chrome badge="#f4511e" /><Running $w={20} $c="#b9b5dd" /></TaskSlot>
        </TaskIcons>
        <Tray>
          <svg width="14" height="9" viewBox="0 0 14 9"><path d="M1 8l6-6 6 6" stroke="#fff" strokeWidth="1.800" fill="none" /></svg>
          <TwoLines $w={40} $ml={21} $align="center">ENG<br />IN</TwoLines>
          <TrayIcon $ml={17} width="20" height="16" viewBox="0 0 20 16" fill="none" stroke="#fff" strokeWidth="1.500">
            <path d="M1 6a12.500 12.500 0 0 1 18 0M4 9a8.500 8.500 0 0 1 12 0M6.800 11.700a4.500 4.500 0 0 1 6.400 0" /><circle cx="10" cy="14" r="1" fill="#fff" />
          </TrayIcon>
          <TrayIcon $ml={10} width="20" height="16" viewBox="0 0 20 16" fill="none" stroke="#fff" strokeWidth="1.400">
            <path d="M1 5.500h3.500L9 1.500v13L4.500 10.500H1zM13 5.500l5.500 5.500M18.500 5.500L13 11" />
          </TrayIcon>
          <TrayIcon $ml={10} width="21" height="14" viewBox="0 0 21 14">
            <rect x=".8" y=".8" width="16.400" height="12.400" rx="3" stroke="#fff" strokeWidth="1.500" fill="none" />
            <rect x="3" y="3" width="6" height="8" fill="#fff" /><path d="M19 5v4" stroke="#fff" strokeWidth="2" />
          </TrayIcon>
          <TwoLines $w={97} $align="right">09:23 PM<br />23-04-2025</TwoLines>
        </Tray>
      </Taskbar>
    </Screen>
  );
}
